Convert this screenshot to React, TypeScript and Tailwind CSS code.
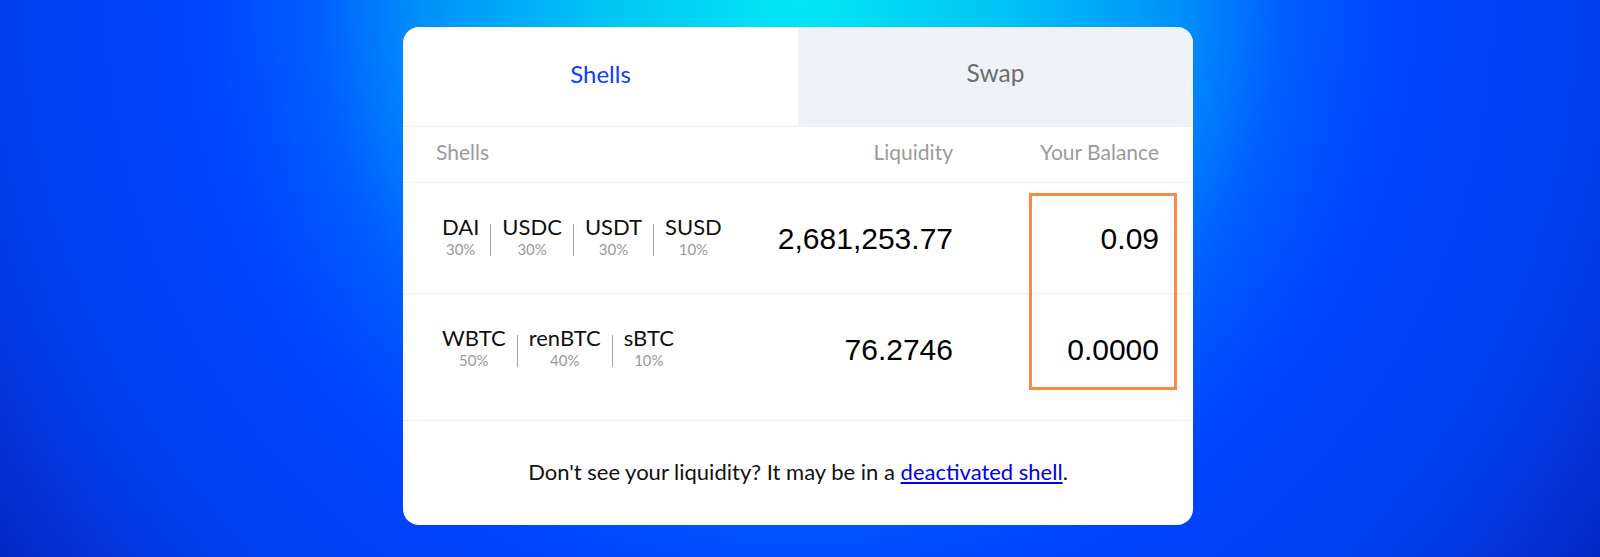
import React from "react";

// pools shown in the shells table
const shells = [
    {
        tokens: [
            { name: "DAI", weight: "30%" },
            { name: "USDC", weight: "30%" },
            { name: "USDT", weight: "30%" },
            { name: "SUSD", weight: "10%" },
        ],
        liquidity: "2,681,253.77",
        balance: "0.09",
    },
    {
        tokens: [
            { name: "WBTC", weight: "50%" },
            { name: "renBTC", weight: "40%" },
            { name: "sBTC", weight: "10%" },
        ],
        liquidity: "76.2746",
        balance: "0.0000",
    },
];

function TokenList({ tokens }: { tokens: { name: string; weight: string }[] }) {
    return (
        <div className="flex items-start -ml-[5px]">
            {tokens.map((t, i) => (
                <React.Fragment key={t.name}>
                    {/* thin divider between tokens */}
                    {i > 0 && <div className="w-px shrink-0 h-[32px] mt-[9px] bg-[#a3a3a3]" />}
                    <div className="flex flex-col items-center shrink-0 px-[11px]">
                        <span className="text-[22px] leading-[24px] text-[#111]">{t.name}</span>
                        <span className="text-[15px] leading-[16px] mt-[2px] text-[#9a9a9a]">{t.weight}</span>
                    </div>
                </React.Fragment>
            ))}
        </div>
    );
}

function ShellRow({ shell, className = "" }: { shell: (typeof shells)[number]; className?: string }) {
    return (
        <div className={`flex items-center pl-[33px] pr-[34px] ${className}`}>
            <div className="flex-1 min-w-0 -mt-[5px]">
                <TokenList tokens={shell.tokens} />
            </div>
            <div className="w-[220px] shrink-0 text-right font-['Liberation_Sans',Arial,sans-serif] text-[30px] text-black">
                {shell.liquidity}
            </div>
            <div className="w-[206px] shrink-0 text-right font-['Liberation_Sans',Arial,sans-serif] text-[30px] text-black">
                {shell.balance}
            </div>
        </div>
    );
}

export default function App() {
    return (
        <div className="w-full h-[557px] overflow-hidden flex justify-center pt-[27px] pr-[4px] bg-[radial-gradient(circle_at_50%_0%,#00e8f5_0px,#00c4f4_200px,#0090fa_380px,#0060ff_480px,#0044ff_600px,#0040ee_800px,#0436dc_880px,#0522c0_1000px)]">
            <div className="relative w-[790px] h-[498px] bg-white rounded-[16px] overflow-hidden flex flex-col font-['Lato',sans-serif]">
                {/* tabs */}
                <div className="flex h-[100px] border-b border-[#eef1f6]">
                    <div className="flex-1 flex items-center justify-center pb-[6px] text-[24px] text-[#0d3dff]">
                        Shells
                    </div>
                    <div className="flex-1 flex items-center justify-center pb-[6px] text-[24.5px] text-[#6e6e6e] bg-[#eff2f7]">
                        Swap
                    </div>
                </div>

                {/* column headings */}
                <div className="flex items-center h-[56px] pb-[5px] pl-[33px] pr-[34px] border-b border-[#eef1f6] text-[21px] text-[#9b9b9b]">
                    <div className="flex-1">Shells</div>
                    <div className="w-[220px] text-right">Liquidity</div>
                    <div className="w-[206px] text-right">Your Balance</div>
                </div>

                <ShellRow shell={shells[0]} className="h-[111px] border-b border-[#eef1f6]" />
                <div className="pb-[16px] border-b border-[#eef1f6]">
                    <ShellRow shell={shells[1]} className="h-[110px]" />
                </div>

                {/* footer note */}
                <div className="flex-1 flex items-center justify-center pb-[4px] text-[22px] text-[#111]">
                    <p>
                        Don't see your liquidity? It may be in a{" "}
                        <a href="#" className="text-[#0000ee] underline">deactivated shell</a>.
                    </p>
                </div>

                {/* highlight around the balance column */}
                <div className="absolute left-[626px] top-[166px] w-[148px] h-[197px] border-[3px] border-[#fb8a46]" />
            </div>
        </div>
    );
}
